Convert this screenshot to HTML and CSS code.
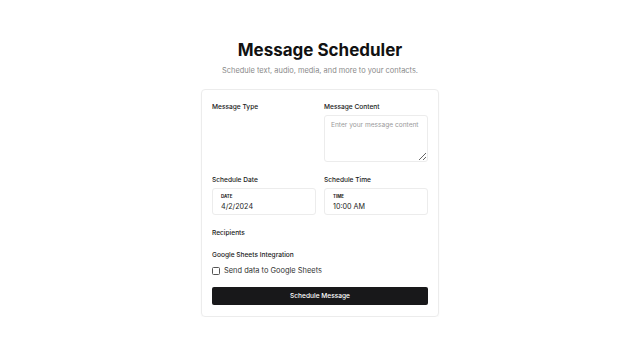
FILE: index.html
```html
<!DOCTYPE html>
<html>
<head>
<meta charset="utf-8">
<link rel="stylesheet" href="styles.css">
</head>
<body>
<div class="page">
  <h1 class="title">Message Scheduler</h1>
  <p class="subtitle">Schedule text, audio, media, and more to your contacts.</p>
  <div class="card">
    <div class="grid">
      <div class="field">
        <div class="label">Message Type</div>
      </div>
      <div class="field">
        <div class="label">Message Content</div>
        <textarea class="textarea" placeholder="Enter your message content"></textarea>
      </div>
      <div class="field">
        <div class="label">Schedule Date</div>
        <div class="picker">
          <div class="picker-cap">DATE</div>
          <div class="picker-val">4/2/2024</div>
        </div>
      </div>
      <div class="field">
        <div class="label">Schedule Time</div>
        <div class="picker">
          <div class="picker-cap">TIME</div>
          <div class="picker-val">10:00 AM</div>
        </div>
      </div>
    </div>
    <div class="label recipients">Recipients</div>
    <div class="label sheets">Google Sheets Integration</div>
    <label class="check-row"><span class="checkbox"></span><span class="check-text">Send data to Google Sheets</span></label>
    <button class="submit">Schedule Message</button>
  </div>
</div>
</body>
</html>
```
FILE: styles.css
```css
* { box-sizing: border-box; }
html, body { margin: 0; padding: 0; background: #ffffff; }
body { font-family: Inter, "Noto Sans", sans-serif; color: #111; }
.page {
  display: flex;
  flex-direction: column;
  align-items: center;
  padding-top: 39px;
}
.title {
  margin: 0;
  font-size: 17px;
  line-height: 23px;
  font-weight: 700;
  color: #111;
}
.subtitle {
  margin: 4px 0 0;
  font-size: 7.45px;
  line-height: 10px;
  color: #8a8a8a;
}
.card {
  margin-top: 13px;
  width: 238px;
  border: 1px solid #ececec;
  border-radius: 4px;
  padding: 13px 10px 11px;
  box-shadow: 0 1px 2px rgba(0,0,0,0.03);
}
.grid {
  display: grid;
  grid-template-columns: 104px 104px;
  column-gap: 8px;
  row-gap: 14px;
}
.label {
  font-size: 6.6px;
  line-height: 9px;
  font-weight: 500;
  color: #1a1a1a;
}
.textarea {
  display: block;
  margin-top: 3px;
  width: 104px;
  height: 47px;
  border: 1px solid #ececec;
  border-radius: 3px;
  padding: 5px 6px;
  font-family: inherit;
  font-size: 6.6px;
  color: #111;
  resize: vertical;
  outline: none;
}
.textarea::placeholder { color: #9a9a9a; }
.picker {
  margin-top: 3px;
  height: 27px;
  border: 1px solid #ececec;
  border-radius: 3px;
  padding: 5px 8px 0;
}
.picker-cap {
  font-size: 4.4px;
  line-height: 6px;
  font-weight: 700;
  color: #222;
}
.picker-val {
  margin-top: 2px;
  font-size: 7.2px;
  line-height: 9px;
  color: #222;
}
.recipients { margin-top: 14px; }
.sheets { margin-top: 13px; }
.check-row {
  display: flex;
  align-items: center;
  gap: 4px;
  margin-top: 5px;
}
.checkbox {
  width: 8px;
  height: 8px;
  border: 1px solid #555;
  border-radius: 1.5px;
  background: #fff;
}
.check-text {
  font-size: 7.45px;
  line-height: 11px;
  color: #333;
}
.submit {
  display: block;
  margin-top: 11px;
  width: 100%;
  height: 18px;
  border: none;
  border-radius: 2px;
  background: #18181a;
  color: #fff;
  font-family: inherit;
  font-size: 6.6px;
  font-weight: 500;
  padding: 0;
}
```
